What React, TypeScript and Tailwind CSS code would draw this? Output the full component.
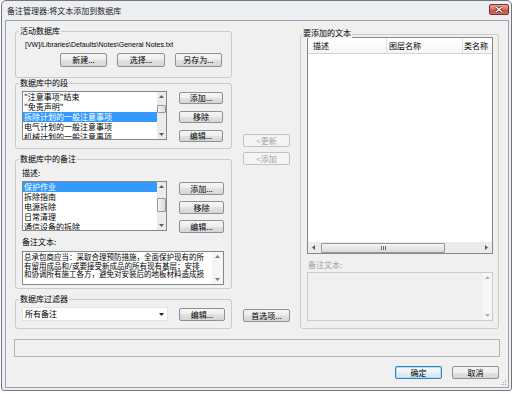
import React from "react";

type Kind = "normal" | "disabled" | "default";

function Btn({ label, className = "", kind = "normal" }: { label: string; className?: string; kind?: Kind }) {
  const look =
    kind === "disabled"
      ? "border-[#bfc3c7] bg-[#f4f4f4] text-[#a3a3a3]"
      : kind === "default"
      ? "border-[#3c7fb1] bg-[linear-gradient(#f4fafd,#eaf3f9_50%,#dfedf6_50%,#d5e7f2)] shadow-[inset_0_0_0_1px_#a9e2f8]"
      : "border-[#8f9193] bg-[linear-gradient(#f5f5f5,#eeeeee_50%,#e2e2e2_50%,#d6d6d6)]";
  return (
    <button
      type="button"
      className={`flex shrink-0 items-center justify-center rounded-[2px] border text-[8px] leading-none ${look} ${className}`}
    >
      {label}
    </button>
  );
}

function Tri({ dir, color = "#5c5c5c" }: { dir: "up" | "down" | "left" | "right"; color?: string }) {
  const vertical = dir === "up" || dir === "down";
  const w = vertical ? 5 : 3;
  const h = vertical ? 3 : 5;
  const d = {
    up: "M0 3L2.5 0L5 3Z",
    down: "M0 0L5 0L2.5 3Z",
    left: "M3 0L3 5L0 2.5Z",
    right: "M0 0L0 5L3 2.5Z",
  }[dir];
  return (
    <svg width={w} height={h} viewBox={`0 0 ${w} ${h}`}>
      <path d={d} fill={color} />
    </svg>
  );
}

// vertical scrollbar; thumb is a flow element pushed down with a margin class
function VScroll({ thumb, className = "w-[9px]", arrow = "#5c5c5c", track = "bg-[#ebebeb]" }: { thumb?: string; className?: string; arrow?: string; track?: string }) {
  return (
    <div className={`flex h-full shrink-0 flex-col ${track} ${className}`}>
      <div className="flex h-[9px] items-center justify-center">
        <Tri dir="up" color={arrow} />
      </div>
      <div className="flex-1">
        {thumb && <div className={`rounded-[1px] border border-[#979797] bg-[linear-gradient(90deg,#f4f4f4,#dadada)] ${thumb}`} />}
      </div>
      <div className="flex h-[9px] items-center justify-center">
        <Tri dir="down" color={arrow} />
      </div>
    </div>
  );
}

function Group({ title, className = "", labelPos = "-top-[6px] left-[3px]", children }: { title: string; className?: string; labelPos?: string; children?: React.ReactNode }) {
  return (
    <div className={`relative shrink-0 rounded-[3px] border border-[#cbcbcb] ${className}`}>
      <span className={`absolute bg-[#f0f0f0] px-[1px] leading-[10px] ${labelPos}`}>{title}</span>
      {children}
    </div>
  );
}

function ListBox({ items, sel, className, thumb }: { items: string[]; sel: number; className: string; thumb: string }) {
  return (
    <div className={`flex shrink-0 border border-[#828790] bg-white ${className}`}>
      <div className="flex-1 overflow-hidden">
        {items.map((t, i) => (
          <div
            key={t}
            className={`h-[10px] whitespace-nowrap pl-[1px] leading-[10px] ${i === sel ? "bg-[#3399ff] text-white" : ""}`}
          >
            {t}
          </div>
        ))}
      </div>
      <VScroll thumb={thumb} />
    </div>
  );
}

export default function App() {
  return (
    <div className="h-[394px] w-[514px] overflow-hidden bg-white font-['Noto_Sans_CJK_SC',sans-serif] text-[8px] leading-none text-black">
      <div className="ml-[1px] flex h-[391px] w-[511px] flex-col rounded-t-[5px] rounded-b-[3px] border border-[#6f7680] bg-[#eceef1]">
        {/* title bar */}
        <div className="flex h-[19px] shrink-0 items-start justify-between pl-[5px] pr-[2px]">
          <span className="mt-[5px] leading-[9px] text-[#1c1c1c]">备注管理器:将文本添加到数据库</span>
          <div className="mt-[3px] flex h-[11px] w-[20px] items-center justify-center rounded-[2px] border border-[#7c2f26] bg-[linear-gradient(#e9a596,#d5705f_50%,#c64a39_50%,#d0705c)]">
            <svg width="8" height="7" viewBox="0 0 8 7">
              <path d="M1 1L7 6M7 1L1 6" stroke="#4a1a14" strokeWidth="2.6" />
              <path d="M1 1L7 6M7 1L1 6" stroke="#ffffff" strokeWidth="1.5" />
            </svg>
          </div>
        </div>

        {/* client area */}
        <div className="relative mb-[2px] ml-[3px] mr-[2px] flex flex-1 flex-col border border-[#9ba1a9] bg-[#f0f0f0] pl-[9px] pt-[10px]">
          <div className="flex h-[298px] items-start">
            {/* left column */}
            <div className="flex w-[217px] shrink-0 flex-col">
              <Group title="活动数据库" className="h-[47px]">
                <div className="pl-[9px] pt-[8px] font-['Liberation_Sans',sans-serif] text-[7px] leading-[10px] whitespace-nowrap">
                  [VW]/Libraries\Defaults\Notes\General Notes.txt
                </div>
                <div className="mt-[3px] flex gap-[10px] pl-[44px]">
                  <Btn label="新建..." className="h-[14px] w-[47px]" />
                  <Btn label="选择..." className="h-[14px] w-[48px]" />
                  <Btn label="另存为..." className="h-[14px] w-[47px]" />
                </div>
              </Group>

              <Group title="数据库中的段" className="mt-[5px] h-[66px]">
                <div className="flex items-start pl-[6px] pt-[7px]">
                  <ListBox
                    className="h-[49px] w-[145px]"
                    sel={2}
                    thumb="mt-[4px] h-[8px]"
                    items={['"注意事项"结束', '"免责声明"', "拆除计划的一般注意事项", "电气计划的一般注意事项", "机械计划的一般注意事项"]}
                  />
                  <div className="ml-[12px] mt-[1px] flex flex-col gap-[7px]">
                    <Btn label="添加..." className="h-[12px] w-[44px]" />
                    <Btn label="移除" className="h-[12px] w-[44px]" />
                    <Btn label="编辑..." className="h-[12px] w-[44px]" />
                  </div>
                </div>
              </Group>

              <Group title="数据库中的备注" className="mt-[10px] h-[130px]">
                <div className="pl-[6px] pt-[8px]">
                  <div className="leading-[10px]">描述:</div>
                  <div className="mt-[3px] flex items-start">
                    <ListBox
                      className="h-[50px] w-[145px]"
                      sel={0}
                      thumb="mt-[7px] h-[14px]"
                      items={["保护作业", "拆除指南", "电源拆除", "日常清理", "通信设备的拆除"]}
                    />
                    <div className="ml-[12px] mt-[1px] flex flex-col gap-[6px]">
                      <Btn label="添加..." className="h-[13px] w-[45px]" />
                      <Btn label="移除" className="h-[13px] w-[45px]" />
                      <Btn label="编辑..." className="h-[13px] w-[45px]" />
                    </div>
                  </div>
                  <div className="mt-[4px] leading-[10px]">备注文本:</div>
                  <div className="mt-[4px] flex h-[34px] w-[202px] border border-[#828790] bg-white">
                    <div className="flex-1 overflow-hidden whitespace-nowrap pl-[1px] pt-[1px] text-[7.5px] leading-[8.5px]">
                      <div>总承包商应当：采取合理预防措施，全面保护现有的所</div>
                      <div>有留用成品和/或要接受新成品的所有现有基层；安排</div>
                      <div>和协调所有施工各方，避免对安装后的地板材料造成损</div>
                    </div>
                    <VScroll className="w-[11px]" track="bg-[#f5f5f5]" arrow="#7a7a7a" />
                  </div>
                </div>
              </Group>

              <Group title="数据库过滤器" className="mt-[10px] h-[30px]">
                <div className="flex items-start pl-[6px] pt-[7px]">
                  <div className="flex h-[14px] w-[146px] items-center justify-between border border-[#e3e3e3] bg-white pl-[2px] pr-[3px]">
                    <span>所有备注</span>
                    <Tri dir="down" color="#222" />
                  </div>
                  <Btn label="编辑..." className="ml-[11px] mt-[1px] h-[13px] w-[46px]" />
                </div>
              </Group>
            </div>

            {/* middle column */}
            <div className="ml-[11px] flex w-[47px] shrink-0 flex-col">
              <Btn label="<更新" kind="disabled" className="mt-[103px] h-[13px] w-[47px]" />
              <Btn label="<添加" kind="disabled" className="mt-[5px] h-[13px] w-[47px]" />
              <Btn label="首选项..." className="mt-[144px] h-[13px] w-[47px]" />
            </div>

            {/* right column */}
            <Group title="要添加的文本" className="ml-[10px] mt-[3px] h-[295px] w-[199px]" labelPos="-top-[7px] left-[1px]">
              <div className="pl-[6px] pt-[2px]">
                <div className="flex h-[217px] w-[186px] flex-col border border-[#828790] bg-white">
                  <div className="flex h-[16px] shrink-0 border-b border-[#d5d5d5] bg-[linear-gradient(#ffffff,#f4f5f7)] leading-[15px]">
                    <div className="w-[79px] border-r border-[#dcdfe3] pl-[5px]">描述</div>
                    <div className="w-[76px] border-r border-[#dcdfe3] pl-[2px]">图层名称</div>
                    <div className="flex-1 overflow-hidden whitespace-nowrap pl-[1px]">类名称</div>
                  </div>
                  <div className="flex-1" />
                  <div className="flex h-[11px] shrink-0 items-center bg-[#ebebeb]">
                    <div className="flex w-[11px] justify-center">
                      <Tri dir="left" />
                    </div>
                    <div className="ml-[2px] flex h-[10px] w-[124px] items-center justify-center rounded-[1px] border border-[#979797] bg-[linear-gradient(#f4f4f4,#dadada)]">
                      <div className="flex gap-[1px]">
                        <div className="h-[4px] w-[1px] bg-[#6a6a6a]" />
                        <div className="h-[4px] w-[1px] bg-[#6a6a6a]" />
                        <div className="h-[4px] w-[1px] bg-[#6a6a6a]" />
                      </div>
                    </div>
                    <div className="flex-1" />
                    <div className="flex w-[11px] justify-center">
                      <Tri dir="right" />
                    </div>
                  </div>
                </div>
                <div className="ml-[1px] mt-[7px] leading-[8px] text-[#a0a0a0]">备注文本:</div>
                <div className="mt-[3px] flex h-[49px] w-[186px] justify-end border border-[#c9cbce] bg-[#f0f0f0]">
                  <VScroll className="w-[9px]" track="bg-[#f6f6f6]" arrow="#b0b0b0" />
                </div>
              </div>
            </Group>
          </div>

          {/* status line */}
          <div className="-ml-[1px] mt-[10px] h-[18px] w-[486px] border border-[#b3b3b3] bg-[#f0f0f0]" />

          {/* dialog buttons */}
          <div className="-ml-[1px] mt-[9px] flex w-[485px] justify-end gap-[10px]">
            <Btn label="确定" kind="default" className="h-[13px] w-[47px]" />
            <Btn label="取消" className="h-[13px] w-[47px]" />
          </div>

          {/* size grip */}
          <svg className="absolute bottom-[1px] right-[1px]" width="6" height="6" viewBox="0 0 6 6">
            <rect x="4" y="0" width="1" height="1" fill="#a8a8a8" />
            <rect x="2" y="2" width="1" height="1" fill="#a8a8a8" />
            <rect x="4" y="2" width="1" height="1" fill="#a8a8a8" />
            <rect x="0" y="4" width="1" height="1" fill="#a8a8a8" />
            <rect x="2" y="4" width="1" height="1" fill="#a8a8a8" />
            <rect x="4" y="4" width="1" height="1" fill="#a8a8a8" />
          </svg>
        </div>
      </div>
    </div>
  );
}
